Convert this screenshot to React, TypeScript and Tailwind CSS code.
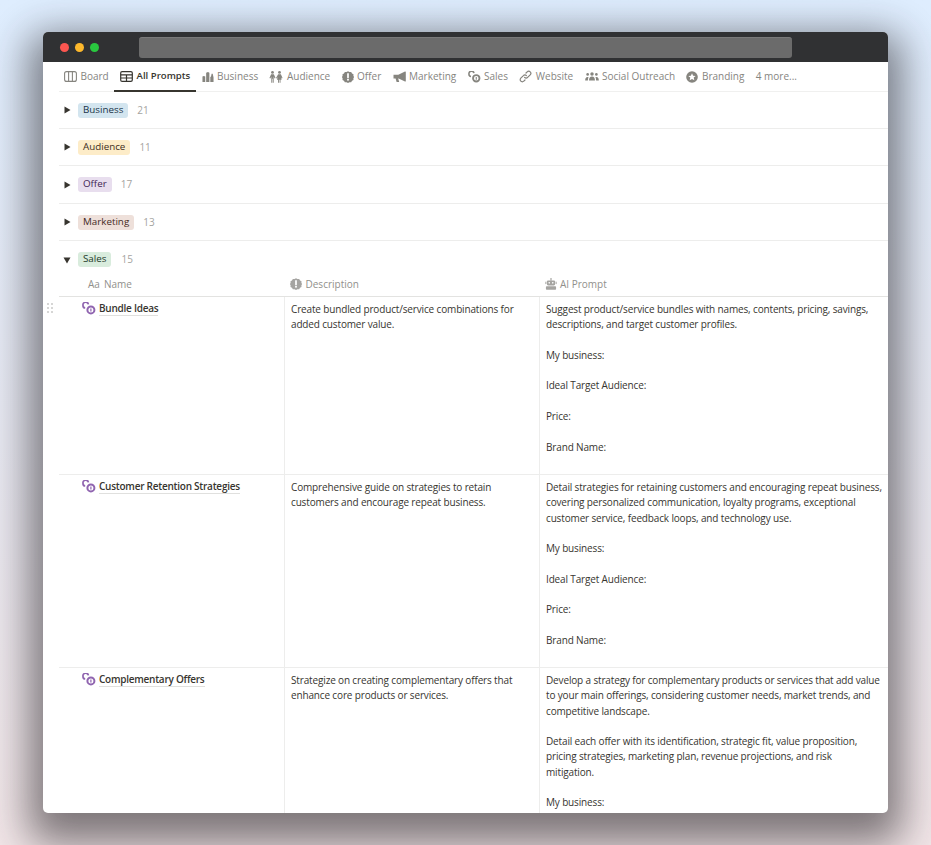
import React from 'react';

const SalesIcon = ({ className }: { className?: string }) => (
  <svg viewBox="0 0 14 13" className={className} fill="none" stroke="currentColor">
    <path d="M6.4 2.4A2.5 2.5 0 0 0 1 3.4 2.5 2.5 0 0 0 3.2 6" strokeWidth="1.7" />
    <circle cx="8.9" cy="7.9" r="3.5" strokeWidth="2" />
    <path d="M8.9 6.4v3" strokeWidth="1.2" />
  </svg>
);

const BoardIcon = () => (
  <svg viewBox="0 0 13 11" className="w-[13px] h-[11px]" fill="none" stroke="currentColor" strokeWidth="1.1">
    <rect x="0.6" y="0.6" width="11.8" height="9.8" rx="2" />
    <path d="M4.6 0.6v9.8M8.4 0.6v9.8" />
  </svg>
);

const TableIcon = () => (
  <svg viewBox="0 0 13 11" className="w-[13px] h-[11px]" fill="none" stroke="currentColor" strokeWidth="1.2">
    <rect x="0.7" y="0.7" width="11.6" height="9.6" rx="1.4" />
    <path d="M0.7 3.8h11.6M0.7 7h11.6M6.5 3.8v6.5" />
  </svg>
);

const BarsIcon = () => (
  <svg viewBox="0 0 13 12" className="w-[12px] h-[12px]" fill="currentColor">
    <path d="M0.5 11.5V5.5L2 5l1.5.5v6zM4.5 11.5V1.5L6.5.5l1.5 1v10zM9 11.5V6l.8-.6.6-3h1.2l.9 4.2v4.9z" />
  </svg>
);

const PeopleIcon = () => (
  <svg viewBox="0 0 15 13" className="w-[14px] h-[12px]" fill="currentColor">
    <circle cx="3.7" cy="1.6" r="1.5" />
    <circle cx="11.3" cy="1.6" r="1.5" />
    <path d="M2.2 3.6h3L7 7.6l-1 .4-1-2v6.6H4V8.4h-.6v4.2H2.4V6l-1 2-1-.4z" />
    <path d="M9.8 3.6h3L14.6 7.6l-1 .4-1-2 1 3.6h-1.2v3h-1v-3h-.7v3h-1v-3H8.5l1-3.6-1 2-1-.4z" />
  </svg>
);

const AlertIcon = ({ bg = '#fff' }: { bg?: string }) => (
  <svg viewBox="0 0 14 14" className="w-[12px] h-[12px]">
    <path
      d="M7 .2l1.7 1 2-.1 1 1.7 1.7 1-.1 2 .9 1.2-.9 1.5.1 1.9-1.7 1-1 1.7-2-.1-1.7 1-1.7-1-2 .1-1-1.7-1.7-1 .1-1.9L-.2 7l.9-1.2-.1-2 1.7-1 1-1.7 2 .1z"
      fill="currentColor"
    />
    <path d="M7 3.4v4.2" stroke={bg} strokeWidth="2" strokeLinecap="round" />
    <circle cx="7" cy="10.3" r="1.15" fill={bg} />
  </svg>
);

const MegaphoneIcon = () => (
  <svg viewBox="0 0 13 12" className="w-[13px] h-[12px]" fill="currentColor">
    <path d="M0.5 3.8h4.8L12 .6c.5-.2.8 0 .8.5v8.8c0 .5-.3.7-.8.5L5.6 7.6h-.4l1 3.4H3.6L2.6 7.6H.5z" />
  </svg>
);

const LinkIcon = () => (
  <svg viewBox="0 0 13 13" className="w-[13px] h-[13px]" fill="none" stroke="currentColor" strokeWidth="1.2" strokeLinecap="round">
    <path d="M5.6 7.4a2 2 0 0 0 3 0l2.6-2.6a2.1 2.1 0 0 0-3-3L7 3" />
    <path d="M7.4 5.6a2 2 0 0 0-3 0L1.8 8.2a2.1 2.1 0 0 0 3 3L6 10" />
  </svg>
);

const PeopleGroupIcon = () => (
  <svg viewBox="0 0 16 12" className="w-[14px] h-[11px]" fill="currentColor">
    <circle cx="8" cy="3" r="2" />
    <circle cx="3" cy="3.6" r="1.5" />
    <circle cx="13" cy="3.6" r="1.5" />
    <path d="M4.6 10.5c0-2.6 1.2-4.4 3.4-4.4s3.4 1.8 3.4 4.4zM0.2 10.5c0-2 .8-3.8 2.8-3.8.4 0 .7.1 1 .2-.5.9-.7 2.2-.7 3.6zM15.8 10.5c0-2-.8-3.8-2.8-3.8-.4 0-.7.1-1 .2.5.9.7 2.2.7 3.6z" />
  </svg>
);

const StarCircleIcon = () => (
  <svg viewBox="0 0 14 14" className="w-[12px] h-[12px]">
    <circle cx="7" cy="7" r="6.8" fill="currentColor" />
    <path d="M7 2.6l1.3 2.8 3 .3-2.3 2 .7 3L7 9.2l-2.7 1.5.7-3-2.3-2 3-.3z" fill="#fff" />
  </svg>
);

const BotIcon = () => (
  <svg viewBox="0 0 13 13" className="w-[12px] h-[12px]">
    <path d="M6.5 0v3" stroke="currentColor" strokeWidth="1.3" />
    <rect x="2" y="2.6" width="9" height="5.4" rx="1.4" fill="currentColor" />
    <rect x="0.4" y="4" width="1" height="2.6" fill="currentColor" />
    <rect x="11.6" y="4" width="1" height="2.6" fill="currentColor" />
    <rect x="1" y="9" width="11" height="3.6" rx="0.8" fill="currentColor" />
    <circle cx="4.6" cy="5.2" r="0.9" fill="#fff" />
    <circle cx="8.4" cy="5.2" r="0.9" fill="#fff" />
  </svg>
);

const tabs = [
  { label: 'Board', icon: <BoardIcon /> },
  { label: 'All Prompts', icon: <TableIcon />, active: true },
  { label: 'Business', icon: <BarsIcon /> },
  { label: 'Audience', icon: <PeopleIcon /> },
  { label: 'Offer', icon: <AlertIcon /> },
  { label: 'Marketing', icon: <MegaphoneIcon /> },
  { label: 'Sales', icon: <SalesIcon className="w-[13px] h-[12px]" /> },
  { label: 'Website', icon: <LinkIcon /> },
  { label: 'Social Outreach', icon: <PeopleGroupIcon /> },
  { label: 'Branding', icon: <StarCircleIcon /> },
];

const groups = [
  { label: 'Business', count: 21, cls: 'bg-[#d3e5ef] text-[#183347]' },
  { label: 'Audience', count: 11, cls: 'bg-[#fdecc8] text-[#402c1b]' },
  { label: 'Offer', count: 17, cls: 'bg-[#e8deee] text-[#412454]' },
  { label: 'Marketing', count: 13, cls: 'bg-[#eee0da] text-[#442a1e]' },
];

const rows = [
  {
    name: 'Bundle Ideas',
    height: 'h-[178px]',
    description: 'Create bundled product/service combinations for added customer value.',
    prompt: [
      'Suggest product/service bundles with names, contents, pricing, savings, descriptions, and target customer profiles.',
      'My business:',
      'Ideal Target Audience:',
      'Price:',
      'Brand Name:',
    ],
  },
  {
    name: 'Customer Retention Strategies',
    height: 'h-[193px]',
    description: 'Comprehensive guide on strategies to retain customers and encourage repeat business.',
    prompt: [
      'Detail strategies for retaining customers and encouraging repeat business, covering personalized communication, loyalty programs, exceptional customer service, feedback loops, and technology use.',
      'My business:',
      'Ideal Target Audience:',
      'Price:',
      'Brand Name:',
    ],
  },
  {
    name: 'Complementary Offers',
    height: 'h-[146px]',
    description: 'Strategize on creating complementary offers that enhance core products or services.',
    prompt: [
      'Develop a strategy for complementary products or services that add value to your main offerings, considering customer needs, market trends, and competitive landscape.',
      'Detail each offer with its identification, strategic fit, value proposition, pricing strategies, marketing plan, revenue projections, and risk\nmitigation.',
      'My business:',
    ],
  },
];

const Triangle = ({ open }: { open?: boolean }) => (
  <svg viewBox="0 0 8 8" className="w-[8px] h-[8px] text-[#37352f]" fill="currentColor">
    {open ? <path d="M0.5 1.5h7L4 7.5z" /> : <path d="M1.5 0.5v7l6-3.5z" />}
  </svg>
);

const Tag = ({ label, cls }: { label: string; cls: string }) => (
  <span className={`rounded-[3px] px-[5px] h-[15px] flex items-center text-[9.8px] font-medium ${cls}`}>{label}</span>
);

const App = () => {
  return (
    <div
      className="w-[931px] h-[845px] overflow-hidden pt-[32px] pl-[43px] bg-gradient-to-b from-[#dfeeff] to-[#f2e6e8]"
      style={{ fontFamily: '"Open Sans", "Noto Sans", sans-serif' }}
    >
      <div className="w-[845px] h-[781px] rounded-[5px] overflow-hidden bg-white flex flex-col shadow-[0_16px_40px_14px_rgba(30,25,30,0.55)]">
        <div className="h-[30px] shrink-0 bg-[#303133] flex items-center pl-[17px]">
          <div className="flex gap-[6px]">
            <span className="w-[9px] h-[9px] rounded-full bg-[#fc5650]" />
            <span className="w-[9px] h-[9px] rounded-full bg-[#fdb82c]" />
            <span className="w-[9px] h-[9px] rounded-full bg-[#29c83f]" />
          </div>
          <div className="ml-[40px] w-[653px] h-[21px] rounded-[3px] bg-[#6b6b6b] border-t border-[#7a7a7a]" />
        </div>

        <div className="h-[30px] shrink-0 ml-[16px] border-b border-[#f0f0ef] flex items-stretch text-[10px] font-medium text-[#86857f]">
          <div className="flex items-stretch pl-[5px] gap-[11.3px]">
            {tabs.map((tab) => (
              <div
                key={tab.label}
                className={`flex items-center gap-[3.5px] relative ${tab.active ? 'text-[#37352f] font-semibold text-[9.6px]' : ''}`}
              >
                {tab.icon}
                <span className="whitespace-nowrap">{tab.label}</span>
                {tab.active && <span className="absolute left-[-6px] right-[-6px] bottom-[-1px] h-[2px] bg-[#37352f]" />}
              </div>
            ))}
            <div className="flex items-center font-normal whitespace-nowrap">4 more...</div>
          </div>
        </div>

        <div className="ml-[16px] flex-1 min-h-0">
          {groups.map((g, i) => (
            <div
              key={g.label}
              className={`flex items-center border-b border-[#ededec] pl-[4px] ${i === 2 ? 'h-[38px]' : 'h-[37px]'}`}
            >
              <Triangle />
              <span className="w-[7px]" />
              <Tag label={g.label} cls={g.cls} />
              <span className="ml-[9px] text-[10px] font-medium text-[#a5a4a1]">{g.count}</span>
            </div>
          ))}

          <div className="flex items-center h-[37px] pl-[4px]">
            <Triangle open />
            <span className="w-[7px]" />
            <Tag label="Sales" cls="bg-[#d9ecdd] text-[#1c3829]" />
            <span className="ml-[10px] text-[10px] font-medium text-[#a5a4a1]">15</span>
          </div>

          <div className="grid grid-cols-[225px_255px_1fr] h-[19px] border-b border-[#e3e3e1] text-[10px] leading-[12px] text-[#91908c]">
            <div className="pl-[29px] flex items-start gap-[4px]">
              <span>Aa</span>
              <span>Name</span>
            </div>
            <div className="pl-[6px] flex items-start gap-[3.5px]">
              <span className="text-[#a5a4a1]"><AlertIcon /></span>
              <span>Description</span>
            </div>
            <div className="pl-[5.5px] flex items-start gap-[3.5px]">
              <span className="text-[#a5a4a1]"><BotIcon /></span>
              <span>AI Prompt</span>
            </div>
          </div>

          {rows.map((row, i) => (
            <div
              key={row.name}
              className={`relative grid grid-cols-[225px_255px_1fr] overflow-hidden ${row.height} ${i < 2 ? 'border-b border-[#ededec]' : ''} text-[10px] tracking-[-0.15px] leading-[15.3px] text-[#37352f]`}
            >
              <div className="pl-[23px] pt-[5px] flex items-start gap-[3px]">
                <SalesIcon className="w-[14px] h-[13px] text-[#9065b0] shrink-0" />
                <span className="font-semibold text-[10px] tracking-[-0.25px] border-b h-[14px] leading-[13px] border-[#e0e0de]">
                  {row.name}
                </span>
              </div>
              <div className="border-l border-[#ededec] pl-[6px] pr-[10px] pt-[5px]">{row.description}</div>
              <div className="border-l border-[#ededec] pl-[6px] pr-[4px] pt-[5px]">
                {row.prompt.map((p) => (
                  <p key={p} className="mb-[15.3px] whitespace-pre-line">
                    {p}
                  </p>
                ))}
              </div>
            </div>
          ))}
        </div>
      </div>
      <div className="absolute left-[47px] top-[303px] grid grid-cols-2 gap-x-[2px] gap-y-[2px]">
        {[0, 1, 2, 3, 4, 5].map((d) => (
          <span key={d} className="w-[2px] h-[2px] rounded-full bg-[#c9c9c7]" />
        ))}
      </div>
    </div>
  );
};

export default App;
